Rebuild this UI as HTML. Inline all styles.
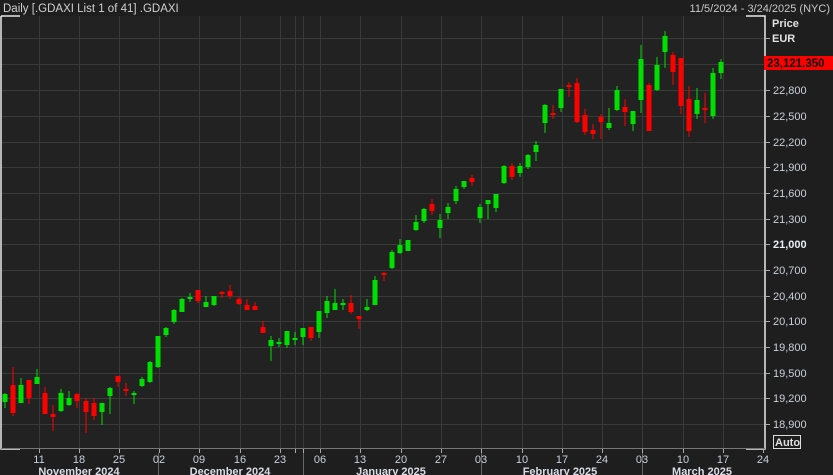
<!DOCTYPE html><html><head><meta charset="utf-8"><style>
body{margin:0;width:833px;height:475px;background:#1e1e1e;overflow:hidden;font-family:"Liberation Sans",sans-serif}
</style></head><body>
<svg width="833" height="475" xmlns="http://www.w3.org/2000/svg" style="display:block">
<rect width="833" height="475" fill="#1e1e1e"/>
<rect x="1" y="16" width="764" height="433" fill="#212221"/>
<text x="3" y="12" fill="#d0d0d0" font-size="11.5" font-family="Liberation Sans">Daily [.GDAXI List 1 of 41] .GDAXI</text>
<text x="830" y="12" fill="#c8c8c8" font-size="11" text-anchor="end" font-family="Liberation Sans">11/5/2024 - 3/24/2025 (NYC)</text>
<g stroke="#3a3a3a" stroke-width="1">
<path d="M1 38.5H765M1 64.5H765M1 90.5H765M1 116.5H765M1 142.5H765M1 167.5H765M1 193.5H765M1 219.5H765M1 244.5H765M1 270.5H765M1 296.5H765M1 321.5H765M1 347.5H765M1 373.5H765M1 398.5H765M1 424.5H765"/>
<path d="M39.5 16V449M79.5 16V449M119.5 16V449M159.5 16V449M199.5 16V449M240.5 16V449M280.5 16V449M295.5 16V449M303.5 16V449M320.5 16V449M360.5 16V449M401.5 16V449M441.5 16V449M481.5 16V449M522.5 16V449M562.5 16V449M602.5 16V449M642.5 16V449M683.5 16V449M723.5 16V449"/>
</g>
<g stroke="#e8e8e8" stroke-width="1.5" fill="none">
<path d="M1 16H20M746 16H765V449H746M1 16V449H20"/>
</g>
<path d="M1 448.5H765" stroke="#777" stroke-width="1"/>
<g stroke="#aaa"><path d="M766 38.5H770M766 64.5H770M766 90.5H770M766 116.5H770M766 142.5H770M766 167.5H770M766 193.5H770M766 219.5H770M766 244.5H770M766 270.5H770M766 296.5H770M766 321.5H770M766 347.5H770M766 373.5H770M766 398.5H770M766 424.5H770"/>
<path d="M39.5 449V453M79.5 449V453M119.5 449V453M159.5 449V453M199.5 449V453M240.5 449V453M280.5 449V453M295.5 449V453M303.5 449V453M320.5 449V453M360.5 449V453M401.5 449V453M441.5 449V453M481.5 449V453M522.5 449V453M562.5 449V453M602.5 449V453M642.5 449V453M683.5 449V453M723.5 449V453M763.5 449V453"/>
<path d="M158.5 453V475M303.5 453V475M481.5 453V475M642.5 453V475" stroke="#666"/></g>
<g fill="#c8d0da" font-size="11" font-family="Liberation Sans">
<text x="772" y="27" fill="#e0e0e0" font-weight="bold">Price</text>
<text x="772" y="42" fill="#e0e0e0" font-weight="bold">EUR</text>
<text x="773" y="94">22,800</text><text x="773" y="120">22,500</text><text x="773" y="146">22,200</text><text x="773" y="171">21,900</text><text x="773" y="197">21,600</text><text x="773" y="223">21,300</text><text x="773" y="248" font-weight="bold" fill="#e8eef5">21,000</text><text x="773" y="274">20,700</text><text x="773" y="300">20,400</text><text x="773" y="325">20,100</text><text x="773" y="351">19,800</text><text x="773" y="377">19,500</text><text x="773" y="402">19,200</text><text x="773" y="428">18,900</text>
</g>
<rect x="764" y="56" width="69" height="14" fill="#ff0000"/>
<text x="767" y="67" fill="#000" font-size="11.5" font-weight="bold" font-family="Liberation Sans">23,121.350</text>
<rect x="773.5" y="435.5" width="27" height="13" fill="none" stroke="#ddd"/>
<text x="775" y="446" fill="#e0e0e0" font-size="11" font-weight="bold" font-family="Liberation Sans">Auto</text>
<g fill="#c8d0da" font-size="11" text-anchor="middle" font-family="Liberation Sans">
<text x="39" y="463">11</text><text x="79" y="463">18</text><text x="119" y="463">25</text><text x="159" y="463">02</text><text x="199" y="463">09</text><text x="240" y="463">16</text><text x="280" y="463">23</text><text x="320" y="463">06</text><text x="360" y="463">13</text><text x="401" y="463">20</text><text x="441" y="463">27</text><text x="481" y="463">03</text><text x="522" y="463">10</text><text x="562" y="463">17</text><text x="602" y="463">24</text><text x="642" y="463">03</text><text x="683" y="463">10</text><text x="723" y="463">17</text><text x="763" y="463">24</text>
</g>
<g fill="#d8dde5" font-size="11" font-weight="bold" text-anchor="middle" font-family="Liberation Sans">
<text x="79" y="475">November 2024</text><text x="230" y="475">December 2024</text><text x="391" y="475">January 2025</text><text x="560" y="475">February 2025</text><text x="702" y="475">March 2025</text>
</g>
<g fill="#00e000">
<rect x="4.5" y="393" width="1" height="15"/><rect x="2.5" y="394" width="5" height="8"/>
<rect x="20.5" y="378" width="1" height="25"/><rect x="18.5" y="385" width="5" height="18"/>
<rect x="36.5" y="369" width="1" height="15"/><rect x="34.5" y="377" width="5" height="7"/>
<rect x="60.5" y="389" width="1" height="23"/><rect x="58.5" y="393" width="5" height="18"/>
<rect x="68.5" y="391" width="1" height="15"/><rect x="66.5" y="398" width="5" height="7"/>
<rect x="101.5" y="403" width="1" height="22"/><rect x="99.5" y="403" width="5" height="9"/>
<rect x="109.5" y="387" width="1" height="27"/><rect x="107.5" y="388" width="5" height="8"/>
<rect x="133.5" y="391" width="1" height="13"/><rect x="131.5" y="393" width="5" height="2"/>
<rect x="141.5" y="377" width="1" height="10"/><rect x="139.5" y="379" width="5" height="7"/>
<rect x="149.5" y="361" width="1" height="22"/><rect x="147.5" y="362" width="5" height="20"/>
<rect x="157.5" y="336" width="1" height="32"/><rect x="155.5" y="336" width="5" height="31"/>
<rect x="165.5" y="327" width="1" height="10"/><rect x="163.5" y="328" width="5" height="7"/>
<rect x="173.5" y="309" width="1" height="15"/><rect x="171.5" y="310" width="5" height="12"/>
<rect x="181.5" y="298" width="1" height="14"/><rect x="179.5" y="299" width="5" height="13"/>
<rect x="189.5" y="293" width="1" height="9"/><rect x="187.5" y="297" width="5" height="2"/>
<rect x="205.5" y="296" width="1" height="11"/><rect x="203.5" y="302" width="5" height="5"/>
<rect x="213.5" y="296" width="1" height="10"/><rect x="211.5" y="296" width="5" height="9"/>
<rect x="270.5" y="336" width="1" height="25"/><rect x="268.5" y="340" width="5" height="6"/>
<rect x="278.5" y="338" width="1" height="9"/><rect x="276.5" y="342" width="5" height="2"/>
<rect x="286.5" y="331" width="1" height="17"/><rect x="284.5" y="331" width="5" height="14"/>
<rect x="294.5" y="332" width="1" height="13"/><rect x="292.5" y="338" width="5" height="2"/>
<rect x="302.5" y="328" width="1" height="17"/><rect x="300.5" y="328" width="5" height="9"/>
<rect x="318.5" y="311" width="1" height="27"/><rect x="316.5" y="311" width="5" height="21"/>
<rect x="326.5" y="296" width="1" height="22"/><rect x="324.5" y="301" width="5" height="12"/>
<rect x="334.5" y="289" width="1" height="21"/><rect x="332.5" y="303" width="5" height="7"/>
<rect x="342.5" y="299" width="1" height="11"/><rect x="340.5" y="303" width="5" height="2"/>
<rect x="366.5" y="299" width="1" height="12"/><rect x="364.5" y="307" width="5" height="3"/>
<rect x="374.5" y="276" width="1" height="29"/><rect x="372.5" y="280" width="5" height="25"/>
<rect x="391.5" y="250" width="1" height="19"/><rect x="389.5" y="252" width="5" height="16"/>
<rect x="399.5" y="239" width="1" height="15"/><rect x="397.5" y="245" width="5" height="8"/>
<rect x="407.5" y="240" width="1" height="11"/><rect x="405.5" y="240" width="5" height="11"/>
<rect x="415.5" y="215" width="1" height="16"/><rect x="413.5" y="222" width="5" height="8"/>
<rect x="423.5" y="208" width="1" height="15"/><rect x="421.5" y="209" width="5" height="12"/>
<rect x="439.5" y="214" width="1" height="24"/><rect x="437.5" y="220" width="5" height="8"/>
<rect x="447.5" y="203" width="1" height="16"/><rect x="445.5" y="207" width="5" height="6"/>
<rect x="455.5" y="186" width="1" height="18"/><rect x="453.5" y="189" width="5" height="12"/>
<rect x="463.5" y="181" width="1" height="8"/><rect x="461.5" y="181" width="5" height="6"/>
<rect x="479.5" y="204" width="1" height="19"/><rect x="477.5" y="207" width="5" height="11"/>
<rect x="487.5" y="200" width="1" height="19"/><rect x="485.5" y="200" width="5" height="4"/>
<rect x="495.5" y="194" width="1" height="18"/><rect x="493.5" y="194" width="5" height="14"/>
<rect x="503.5" y="165" width="1" height="19"/><rect x="501.5" y="166" width="5" height="17"/>
<rect x="519.5" y="163" width="1" height="14"/><rect x="517.5" y="166" width="5" height="7"/>
<rect x="527.5" y="154" width="1" height="15"/><rect x="525.5" y="155" width="5" height="12"/>
<rect x="535.5" y="141" width="1" height="20"/><rect x="533.5" y="145" width="5" height="7"/>
<rect x="544.5" y="104" width="1" height="29"/><rect x="542.5" y="105" width="5" height="18"/>
<rect x="560.5" y="89" width="1" height="23"/><rect x="558.5" y="89" width="5" height="19"/>
<rect x="608.5" y="108" width="1" height="22"/><rect x="606.5" y="123" width="5" height="5"/>
<rect x="616.5" y="86" width="1" height="25"/><rect x="614.5" y="90" width="5" height="20"/>
<rect x="632.5" y="111" width="1" height="20"/><rect x="630.5" y="111" width="5" height="13"/>
<rect x="640.5" y="45" width="1" height="68"/><rect x="638.5" y="59" width="5" height="41"/>
<rect x="656.5" y="57" width="1" height="34"/><rect x="654.5" y="65" width="5" height="25"/>
<rect x="664.5" y="31" width="1" height="37"/><rect x="662.5" y="36" width="5" height="16"/>
<rect x="696.5" y="88" width="1" height="31"/><rect x="694.5" y="100" width="5" height="14"/>
<rect x="712.5" y="68" width="1" height="51"/><rect x="710.5" y="73" width="5" height="43"/>
<rect x="720.5" y="59" width="1" height="20"/><rect x="718.5" y="62" width="5" height="11"/>
</g>
<g fill="#ff0000">
<rect x="12.5" y="367" width="1" height="49"/><rect x="10.5" y="385" width="5" height="28"/>
<rect x="28.5" y="380" width="1" height="24"/><rect x="26.5" y="380" width="5" height="18"/>
<rect x="44.5" y="387" width="1" height="27"/><rect x="42.5" y="393" width="5" height="21"/>
<rect x="52.5" y="405" width="1" height="26"/><rect x="50.5" y="414" width="5" height="3"/>
<rect x="76.5" y="393" width="1" height="15"/><rect x="74.5" y="394" width="5" height="7"/>
<rect x="85.5" y="398" width="1" height="35"/><rect x="83.5" y="401" width="5" height="11"/>
<rect x="93.5" y="398" width="1" height="22"/><rect x="91.5" y="403" width="5" height="13"/>
<rect x="117.5" y="376" width="1" height="11"/><rect x="115.5" y="376" width="5" height="6"/>
<rect x="125.5" y="383" width="1" height="13"/><rect x="123.5" y="389" width="5" height="2"/>
<rect x="197.5" y="290" width="1" height="13"/><rect x="195.5" y="290" width="5" height="11"/>
<rect x="221.5" y="291" width="1" height="7"/><rect x="219.5" y="292" width="5" height="2"/>
<rect x="229.5" y="285" width="1" height="14"/><rect x="227.5" y="291" width="5" height="5"/>
<rect x="238.5" y="297" width="1" height="8"/><rect x="236.5" y="299" width="5" height="5"/>
<rect x="246.5" y="299" width="1" height="11"/><rect x="244.5" y="305" width="5" height="5"/>
<rect x="254.5" y="302" width="1" height="8"/><rect x="252.5" y="306" width="5" height="4"/>
<rect x="262.5" y="321" width="1" height="12"/><rect x="260.5" y="327" width="5" height="6"/>
<rect x="310.5" y="327" width="1" height="14"/><rect x="308.5" y="327" width="5" height="11"/>
<rect x="350.5" y="295" width="1" height="19"/><rect x="348.5" y="303" width="5" height="9"/>
<rect x="358.5" y="316" width="1" height="13"/><rect x="356.5" y="316" width="5" height="3"/>
<rect x="383.5" y="272" width="1" height="9"/><rect x="381.5" y="273" width="5" height="2"/>
<rect x="431.5" y="199" width="1" height="16"/><rect x="429.5" y="204" width="5" height="7"/>
<rect x="471.5" y="175" width="1" height="11"/><rect x="469.5" y="178" width="5" height="4"/>
<rect x="511.5" y="163" width="1" height="17"/><rect x="509.5" y="166" width="5" height="11"/>
<rect x="552.5" y="105" width="1" height="14"/><rect x="550.5" y="113" width="5" height="2"/>
<rect x="568.5" y="82" width="1" height="15"/><rect x="566.5" y="85" width="5" height="2"/>
<rect x="576.5" y="78" width="1" height="45"/><rect x="574.5" y="83" width="5" height="39"/>
<rect x="584.5" y="109" width="1" height="26"/><rect x="582.5" y="115" width="5" height="17"/>
<rect x="592.5" y="124" width="1" height="15"/><rect x="590.5" y="130" width="5" height="4"/>
<rect x="600.5" y="114" width="1" height="25"/><rect x="598.5" y="117" width="5" height="5"/>
<rect x="624.5" y="99" width="1" height="27"/><rect x="622.5" y="107" width="5" height="5"/>
<rect x="648.5" y="83" width="1" height="48"/><rect x="646.5" y="85" width="5" height="46"/>
<rect x="672.5" y="52" width="1" height="33"/><rect x="670.5" y="55" width="5" height="17"/>
<rect x="680.5" y="58" width="1" height="56"/><rect x="678.5" y="58" width="5" height="48"/>
<rect x="688.5" y="86" width="1" height="51"/><rect x="686.5" y="99" width="5" height="32"/>
<rect x="704.5" y="93" width="1" height="30"/><rect x="702.5" y="108" width="5" height="2"/>
</g>
</svg>
</body></html>
